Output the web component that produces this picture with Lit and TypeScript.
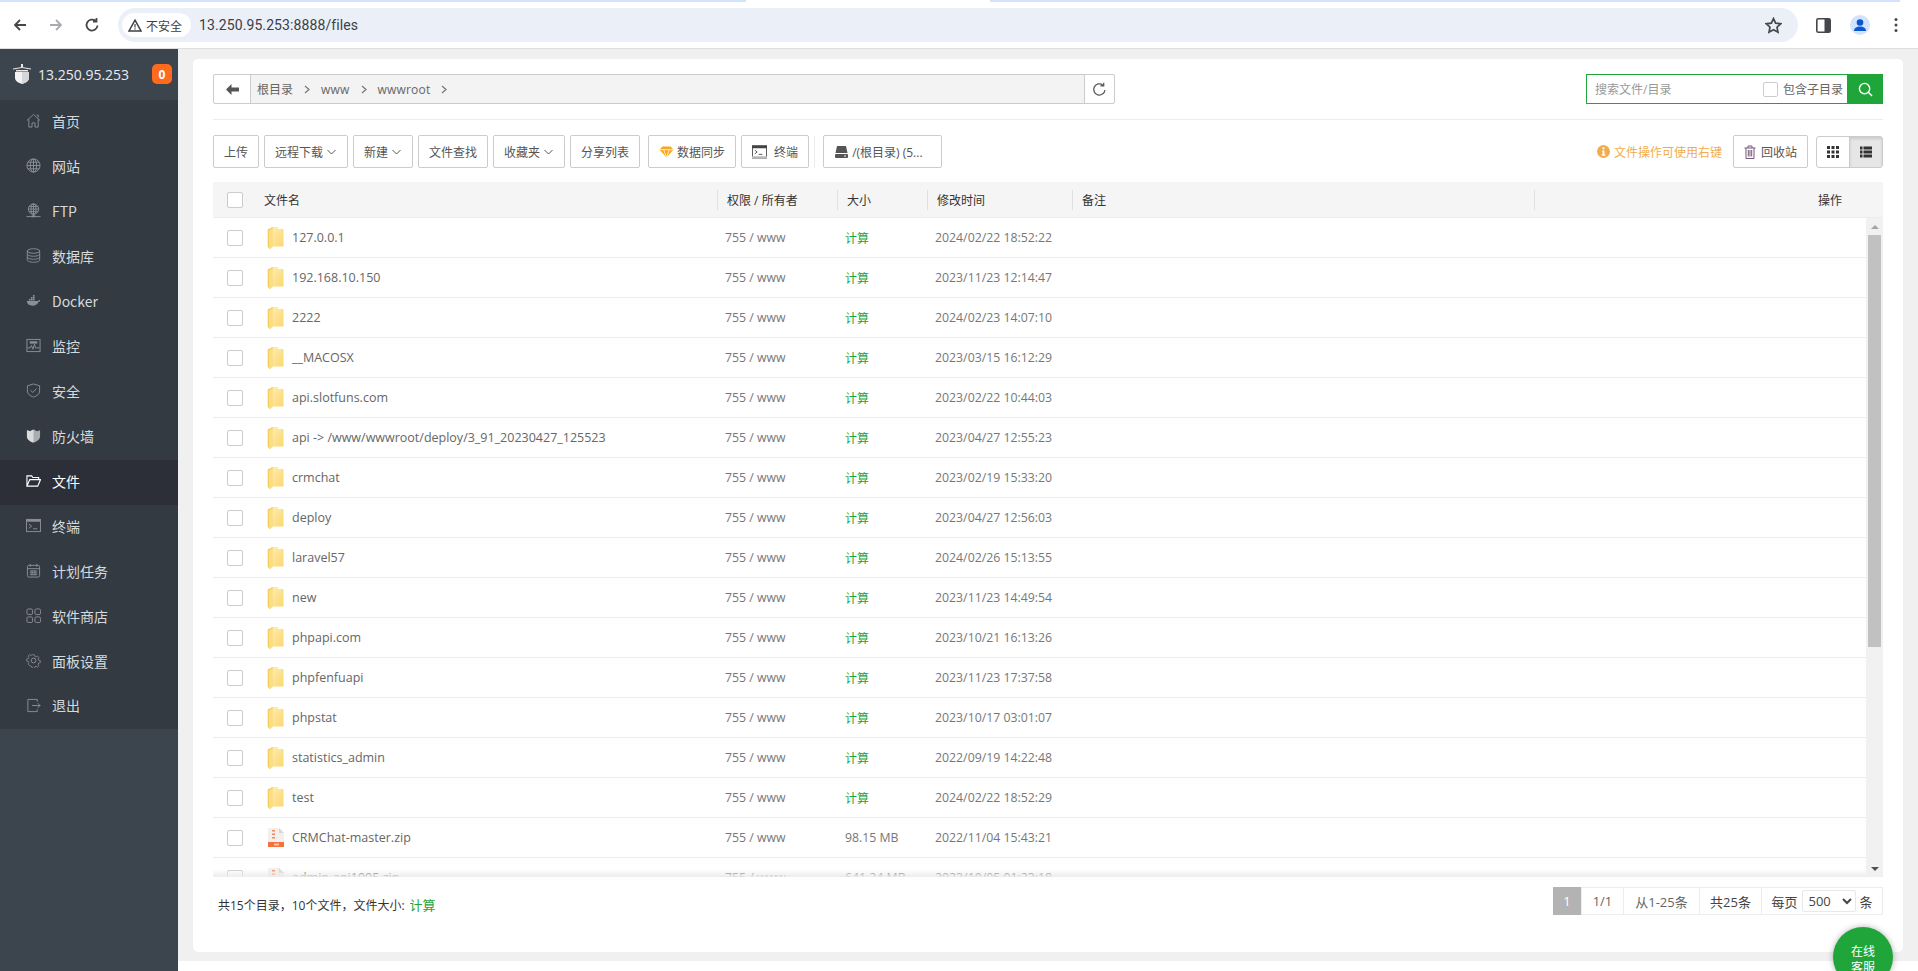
import { LitElement, html, css, svg } from "lit";
import { customElement } from "lit/decorators.js";

const ic = (body: unknown, cls = "sic") => html`<svg class=${cls} viewBox="0 0 16 16">${body}</svg>`;

const navIcons: Record<string, unknown> = {
  home: svg`<path d="M1 8 8 1.5 15 8M3 6.6V15h3.4v-4.4h3.2V15H13V6.6M11.6 2.2h1.4v2.6"/>`,
  globe: svg`<circle cx="8" cy="8" r="7"/><ellipse cx="8" cy="8" rx="3.4" ry="7"/><path d="M8 1v14M1 8h14M2 4.500h12M2 11.500h12"/>`,
  ftp: svg`<circle cx="8" cy="6.500" r="5.500"/><ellipse cx="8" cy="6.500" rx="2.600" ry="5.500"/><path d="M8 1v11M2.500 6.500h11M3.400 3.800h9.200M3.400 9.200h9.200M8 12v2M0.500 14.500h15"/><rect class="f" x="6" y="13.200" width="4" height="2"/>`,
  db: svg`<ellipse cx="8" cy="3.200" rx="6.600" ry="2.400"/><path d="M1.400 3.200v9.600c0 1.300 3 2.400 6.600 2.400s6.600-1.100 6.600-2.400V3.200M1.400 6.400c0 1.300 3 2.400 6.600 2.400s6.600-1.100 6.600-2.400M1.400 9.600c0 1.300 3 2.400 6.600 2.400s6.600-1.100 6.600-2.400"/>`,
  docker: svg`<path class="f" d="M.8 8.600h12c.4-.9 1.300-1.300 2.400-1-.2 1-1 1.700-2 1.900-1 2.700-3.200 4-6.300 4-3.700 0-5.700-1.800-6.100-4.900Z"/><path class="f" d="M3 6.400h1.800v1.700H3zM5.200 6.400H7v1.700H5.200zM7.400 6.400h1.800v1.700H7.400zM5.200 4.300H7V6H5.200zM7.400 4.300h1.800V6H7.400zM7.400 2.200h1.800v1.700H7.400z"/>`,
  monitor: svg`<rect x="1" y="1.500" width="14" height="13"/><path d="M1.500 10.500h3l1.300-2.500 1.700 4 1.500-5.500 1.200 4h4.300"/><rect class="f" x="4" y="3.500" width="8" height="2.500"/>`,
  shield: svg`<path d="M8 1 14.500 3v5.500c0 3.200-2.800 5.300-6.500 6.500-3.700-1.200-6.500-3.300-6.500-6.500V3Z"/><path d="m4.800 7.700 2.400 2.400 4-4.200"/>`,
  wall: svg`<path class="l" d="M1 2.500 4.300 3.500 8 1.500 11.700 3.500 15 2.500V9c0 3-3.500 5.500-7 6.500-3.500-1-7-3.500-7-6.500Z"/><path class="f2" d="M1 2.500 4.300 3.500 8 1.500v14c-3.500-1-7-3.500-7-6.500Z"/>`,
  folder: svg`<path class="w" d="M1 14V3h5l1.300 1.800h6.200V7M1 14h11.500L15.500 7H4L1 14Z"/>`,
  term: svg`<rect x=".5" y="1.500" width="15" height="13"/><rect class="f" x=".5" y="1.500" width="15" height="2.500"/><path d="m3 6.500 3 2.200-3 2.200M7.500 11.500H12"/>`,
  cal: svg`<rect x="1.500" y="2.500" width="13" height="12.500" rx="1.500"/><path d="M1.500 6h13M4.500 1v3M11.500 1v3M4 8.500h8M4 10.500h8M4 12.500h8M6.500 8v5M9.500 8v5"/>`,
  grid: svg`<rect x="1" y="1" width="6" height="6" rx="1.500"/><rect x="9.500" y="1" width="6" height="6" rx="1.500"/><rect x="1" y="9.500" width="6" height="6" rx="1.500"/><rect x="9.500" y="9.500" width="6" height="6" rx="1.500"/>`,
  gear: svg`<circle cx="8" cy="8" r="2.500"/><path d="M6.700 1h2.600l.4 2 1.500.7 1.800-1.100 1.800 1.800-1.100 1.800.7 1.500 2 .4v2.600l-2 .4-.7 1.500 1.100 1.800-1.800 1.800-1.800-1.100-1.500.7-.4 2H6.700l-.4-2-1.500-.7L3 14.200l-1.800-1.800 1.100-1.800-.7-1.500-2-.4V6.100l2-.4.7-1.500L1.200 2.400 3 .6l1.800 1.100 1.500-.7Z" transform="translate(1.100 1.100) scale(.86)"/>`,
  exit: svg`<path d="M12 4V1.500H2v13h10V12M6.500 8h8.500M12.500 5.500 15 8l-2.500 2.500"/>`,
};

const nav: [string, string, boolean?][] = [
  ["首页", "home"], ["网站", "globe"], ["FTP", "ftp"], ["数据库", "db"], ["Docker", "docker"],
  ["监控", "monitor"], ["安全", "shield"], ["防火墙", "wall"], ["文件", "folder", true], ["终端", "term"],
  ["计划任务", "cal"], ["软件商店", "grid"], ["面板设置", "gear"], ["退出", "exit"],
];

const rows: [string, string, string, string?][] = [
  ["127.0.0.1", "755 / www", "2024/02/22 18:52:22"],
  ["192.168.10.150", "755 / www", "2023/11/23 12:14:47"],
  ["2222", "755 / www", "2024/02/23 14:07:10"],
  ["__MACOSX", "755 / www", "2023/03/15 16:12:29"],
  ["api.slotfuns.com", "755 / www", "2023/02/22 10:44:03"],
  ["api -> /www/wwwroot/deploy/3_91_20230427_125523", "755 / www", "2023/04/27 12:55:23"],
  ["crmchat", "755 / www", "2023/02/19 15:33:20"],
  ["deploy", "755 / www", "2023/04/27 12:56:03"],
  ["laravel57", "755 / www", "2024/02/26 15:13:55"],
  ["new", "755 / www", "2023/11/23 14:49:54"],
  ["phpapi.com", "755 / www", "2023/10/21 16:13:26"],
  ["phpfenfuapi", "755 / www", "2023/11/23 17:37:58"],
  ["phpstat", "755 / www", "2023/10/17 03:01:07"],
  ["statistics_admin", "755 / www", "2022/09/19 14:22:48"],
  ["test", "755 / www", "2024/02/22 18:52:29"],
  ["CRMChat-master.zip", "755 / www", "2022/11/04 15:43:21", "98.15 MB"],
  ["admin-api1005.zip", "755 / www", "2023/10/05 01:23:18", "641.24 MB"],
];

const chev = html`<svg class="chev" viewBox="0 0 10 6"><path d="M1 1l4 4 4-4"/></svg>`;
const folderIcon = html`<svg class="ficon" viewBox="0 0 17 24">
  <defs><linearGradient id="fg" x1="0" x2="1" y1="0" y2="1"><stop offset="0" stop-color="#fdedb4"/><stop offset="1" stop-color="#fbd76c"/></linearGradient></defs>
  <path d="M5 1h5.500l1 2h5V20.500H5Z" fill="url(#fg)"/>
  <path d="M.8 3.500 5.800 1v19.500L2.800 23.500.8 21Z" fill="#fbdd84"/>
  <path d="M.8 3.500 5.800 1v1L2 4.200V22L.8 21Z" fill="#f3cd62"/>
  </svg>`;
const zipIcon = html`<svg class="zicon" viewBox="0 0 16 19">
  <path d="M0 0h11l5 5v14H0Z" fill="#f3efec"/>
  <path d="M11 0l5 5h-5Z" fill="#dcd8d4"/>
  <rect x="0" y="14" width="16" height="5" fill="#f4703c"/>
  <path d="M4 2h3v1.500H4zM4 5.500h3V7H4zM4 9h3v1.500H4z" fill="#ee8a60"/>
  <rect x="6" y="15.500" width="5" height="2" fill="#f9c0a6"/>
  </svg>`;

@customElement("app-root")
export class AppRoot extends LitElement {
  static styles = css`
    :host { display: block; width: 1918px; height: 971px; overflow: hidden; position: relative; background: #fff;
      font-family: "Open Sans", "Noto Sans CJK SC", sans-serif; font-size: 12px; color: #555; }
    * { box-sizing: border-box; }
    .strip { display: flex; height: 2px; }
    .strip i { background: #d3e3fd; width: 746px; }
    .strip b { flex: 1; }
    .strip i:last-child { width: 910px; margin-right: 18px; }
    .chrome { height: 47px; display: flex; align-items: flex-start; border-bottom: 1px solid #dedede; padding-top: 6px; }
    .navb { width: 118px; height: 34px; display: flex; align-items: center; flex: none; padding-left: 12px; gap: 20px; }
    .navb svg { width: 16px; height: 16px; fill: none; stroke: #45474a; stroke-width: 1.8; }
    .navb svg.off { stroke: #a8abaf; }
    .addr { width: 1680px; height: 34px; border-radius: 17px; background: #ebeff8; display: flex; align-items: center; padding: 0 4px; flex: none; position: relative; }
    .pill { width: 69px; height: 24px; border-radius: 12px; background: #fff; display: flex; align-items: center; padding-left: 6px; gap: 4px; font-size: 12px; color: #3c4043; flex: none; font-family: "Noto Sans CJK SC", sans-serif; }
    .pill svg { width: 14px; height: 13px; flex: none; }
    .url { font-family: Roboto, sans-serif; font-size: 14px; margin-left: 8px; color: #3c4043; letter-spacing: .1px; }
    .star { width: 17px; height: 17px; margin-left: auto; margin-right: 12px; fill: none; stroke: #45474a; stroke-width: 1.6; }
    .cright { display: flex; align-items: center; height: 34px; flex: 1; position: relative; }
    .panel { width: 15px; height: 15px; margin-left: 18px; }
    .avatar { width: 20px; height: 20px; margin-left: 19px; }
    .dots { width: 4px; height: 16px; margin-left: 24px; }
    .layout { display: flex; height: 922px; }
    .side { width: 178px; flex: none; background: #3c444d; height: 100%; }
    .brand { height: 51px; display: flex; align-items: center; padding-left: 13px; padding-bottom: 1px; color: #fff; }
    .brand .logo { width: 18px; height: 20px; flex: none; margin-right: 7px; }
    .brand .name { flex: 1; font-size: 14px; color: #e8ecef; }
    .badge { width: 20px; height: 20px; background: #ff6a1c; border-radius: 5px; color: #fff; font-size: 12px; font-weight: 700; display: flex; align-items: center; justify-content: center; margin-right: 6px; }
    .menu { background: #333a42; height: 629px; }
    .item { height: 45px; display: flex; align-items: center; padding-left: 26px; padding-bottom: 4px; gap: 11px; font-size: 14px; color: #d6dadd; font-family: "Noto Sans CJK SC", sans-serif; }
    .item.on { background: #2c2f38; color: #fff; }
    .item:last-child { height: 44px; }
    .sic { width: 15px; height: 15px; fill: none; stroke: #8b9096; stroke-width: 1; flex: none; }
    .sic .f { fill: #8b9096; stroke: none; }
    .sic .l { fill: #a9adb1; stroke: none; }
    .sic .f2 { fill: #d9dbdd; stroke: none; }
    .sic .w { stroke: #fff; stroke-width: 1.2; }
    .mainwrap { flex: 1; display: flex; flex-direction: column; min-width: 0; }
    .main { height: 912px; background: #f0f0f0; padding: 10px 15px 9px; }
    .card { height: 893px; background: #fff; border-radius: 5px; padding: 15px 20px 0; }
    .top { display: flex; justify-content: space-between; height: 46px; border-bottom: 1px solid #ececec; }
    .path { width: 902px; height: 30px; display: flex; border: 1px solid #ccc; border-radius: 2px; }
    .back { width: 37px; flex: none; border-right: 1px solid #ccc; display: flex; align-items: center; justify-content: center; }
    .back svg { width: 13px; height: 11px; fill: #555; }
    .crumbs { flex: 1; background: #f3f3f3; display: flex; align-items: center; padding-left: 6px; font-size: 12px; color: #666; }
    .crumbs span { margin-right: 11px; letter-spacing: .2px; }
    .crumbs span:first-child { letter-spacing: 0; }
    .crumbs svg { width: 6px; height: 9px; fill: none; stroke: #777; stroke-width: 1.2; margin-right: 11px; }
    .refresh { width: 30px; flex: none; border-left: 1px solid #ccc; display: flex; align-items: center; justify-content: center; }
    .refresh svg { width: 15px; height: 15px; fill: none; stroke: #555; stroke-width: 1.3; }
    .search { width: 297px; height: 30px; display: flex; border: 1px solid #20a53a; align-items: center; }
    .ph { color: #999; padding-left: 8px; flex: 1; }
    .search .cb { width: 15px; height: 15px; margin-right: 5px; }
    .inc { color: #666; margin-right: 5px; }
    .sbtn { width: 36px; height: 30px; background: #20a53a; display: flex; align-items: center; justify-content: center; margin: -1px; }
    .sbtn svg { width: 15px; height: 15px; fill: none; stroke: #fff; stroke-width: 1.5; }
    .cb { width: 16px; height: 16px; border: 1px solid #ccc; border-radius: 2px; background: #fff; flex: none; display: block; }
    .tools { display: flex; align-items: center; height: 33px; margin-top: 15px; gap: 5px; }
    .btn { height: 33px; display: inline-flex; align-items: center; justify-content: center; border: 1px solid #ccc; border-radius: 2px; padding: 0 10px; color: #555; background: #fff; white-space: nowrap; flex: none; }
    .chev { width: 11px; height: 6px; margin-left: 3px; fill: none; stroke: #555; stroke-width: 1; }
    .gem { margin-left: 3px; }
    .btn svg.i { width: 15px; height: 14px; margin-right: 5px; flex: none; }
    .gem svg.i { height: 13px; margin-right: 3px; }
    .term svg.i { margin-right: 7px; }
    .vsep { width: 1px; height: 32px; background: #ececec; }
    .disk { width: 119px; margin-left: 3px; justify-content: flex-start; }
    .disk svg.i { margin-right: 3px; }
    .hint { margin-left: auto; display: flex; align-items: center; gap: 4px; color: #f0ad4e; margin-right: 6px; }
    .hint svg { width: 13px; height: 13px; }
    .trash { width: 75px; }
    .trash svg { width: 12px; height: 14px; margin-right: 5px; fill: none; stroke: #76557a; stroke-width: 1; }
    .view { width: 67px; height: 32px; display: flex; border: 1px solid #ccc; border-radius: 3px; margin-left: 3px; }
    .view div { flex: 1; display: flex; align-items: center; justify-content: center; }
    .view div + div { background: #e6e6e6; border-left: 1px solid #ccc; box-shadow: inset 0 2px 3px rgba(0,0,0,.12); }
    .view svg { width: 12px; height: 12px; fill: #333; }
    .thead, .row { display: grid; grid-template-columns: 504px 120px 90px 145px 462px 1fr; align-items: center; }
    .thead { height: 36px; margin-top: 14px; background: #f5f5f5; border-bottom: 1px solid #ececec; color: #333; }
    .thead .c { height: 20px; display: flex; align-items: center; padding-left: 9px; border-left: 1px solid #e0e0e0; }
    .thead .c0 { display: flex; align-items: center; padding-left: 14px; }
    .thead .lbl { margin-left: 21px; }
    .thead .last { padding-right: 41px; justify-content: flex-end; }
    .tbody { height: 659px; display: flex; position: relative; overflow: hidden; }
    .list { width: 1653px; flex: none; }
    .row { height: 40px; border-bottom: 1px solid #ececec; color: #777; grid-template-columns: 504px 120px 90px 1fr; }
    .nm { display: flex; align-items: center; padding-left: 14px; color: #666; }
    .ficon { width: 17px; height: 24px; margin-left: 24px; flex: none; }
    .zicon { width: 16px; height: 19px; margin-left: 25px; flex: none; }
    .fname { margin-left: 8px; white-space: pre; font-size: 12.5px; }
    .row .p { padding-left: 8px; font-size: 12.3px; }
    .row .calc { color: #20a53a; font-size: 12px; }
    .fade { position: absolute; left: 0; right: 17px; bottom: 0; height: 8px; background: linear-gradient(rgba(240,240,240,0), rgba(235,235,235,.9)); }
    .bar { width: 17px; flex: none; background: #f1f1f1; display: flex; flex-direction: column; align-items: center; }
    .arrow { height: 17px; flex: none; display: flex; align-items: center; justify-content: center; }
    .arrow svg { width: 8px; height: 4px; }
    .thumb { width: 13px; height: 412px; background: #c1c1c1; flex: none; }
    .bar .sp { flex: 1; }
    .foot { display: flex; justify-content: space-between; align-items: flex-start; margin-top: 10px; }
    .sum { color: #333; padding: 8px 0 0 5px; display: flex; align-items: center; }
    .sum em { font-style: normal; color: #20a53a; font-size: 13px; margin-left: 5px; }
    .pg { display: flex; height: 28px; border: 1px solid #ececec; border-left: 0; color: #666; font-size: 13px; }
    .pg > div { display: flex; align-items: center; justify-content: center; border-left: 1px solid #ececec; }
    .pg .cur { width: 28px; background: #b3b3b3; color: #fff; border: 0; margin-top: -1px; height: 28px; }
    .pg .a { width: 42px; }
    .pg .b { width: 76px; }
    .pg .c2 { width: 62px; color: #444; }
    .pg .d { width: 121px; color: #444; gap: 4px; }
    select { width: 54px; height: 22px; border: 1px solid #e8e8e8; border-radius: 2px; background: #fff; font: 13px "Open Sans", sans-serif; color: #444; padding: 0 0 0 2px; outline: none; }
    .white { height: 10px; background: #fff; }
    .kefu { position: absolute; left: 1833px; top: 927px; width: 60px; height: 60px; border-radius: 50%; background: #20a53a; color: #fff; text-align: center; line-height: 16px; padding-top: 17px; box-shadow: 0 0 6px rgba(0,0,0,.3); }
  `;

  render() {
    return html`
      <div class="strip"><i></i><b></b><i></i></div>
      <div class="chrome">
        <div class="navb">
          <svg viewBox="0 0 16 16"><path d="M14 8H3M8 3 3 8l5 5"/></svg>
          <svg class="off" viewBox="0 0 16 16"><path d="M2 8h11M8 3l5 5-5 5"/></svg>
          <svg viewBox="0 0 16 16"><path d="M13.500 8.500A5.500 5.500 0 1 1 11.500 3.800M12.500 1v3.500H9"/></svg>
        </div>
        <div class="addr">
          <div class="pill">
            <svg viewBox="0 0 14 13"><path d="M7 1.200 13 12H1Z" fill="none" stroke="#3c4043" stroke-width="1.500"/><path d="M6.400 5h1.200v3.500H6.400zM6.400 9.300h1.200v1.200H6.400z" fill="#3c4043"/></svg>
            不安全
          </div>
          <span class="url">13.250.95.253:8888/files</span>
          <svg class="star" viewBox="0 0 16 16"><path d="m8 1.500 2 4.300 4.700.6-3.400 3.200.9 4.700L8 12l-4.200 2.300.9-4.700L1.300 6.400 6 5.800Z"/></svg>
        </div>
        <div class="cright">
          <svg class="panel" viewBox="0 0 15 15"><rect x=".8" y=".8" width="13.400" height="13.400" rx="1.500" fill="#fff" stroke="#45474a" stroke-width="1.600"/><rect x="8.500" y="1" width="5.500" height="13" fill="#45474a"/></svg>
          <svg class="avatar" viewBox="0 0 20 20"><circle cx="10" cy="10" r="10" fill="#d3e3fd"/><circle cx="10" cy="7.500" r="3.300" fill="#0b57d0"/><path d="M4 16c0-3 2.500-4.500 6-4.500s6 1.500 6 4.500Z" fill="#0b57d0"/></svg>
          <svg class="dots" viewBox="0 0 4 16"><circle cx="2" cy="2.500" r="1.500" fill="#45474a"/><circle cx="2" cy="8" r="1.500" fill="#45474a"/><circle cx="2" cy="13.500" r="1.500" fill="#45474a"/></svg>
        </div>
      </div>
      <div class="layout">
        <aside class="side">
          <div class="brand">
            <svg class="logo" viewBox="0 0 18 20"><path d="M2 8h14v6c0 3-3.500 5-7 6-3.500-1-7-3-7-6Z" fill="#f3f3f3"/><path d="M9 8h7v6c0 3-3.500 5-7 6Z" fill="#d4d6d8"/><path d="M0 4.500 9 3l9 1.500v1L9 4 0 5.500ZM3 6h12v1.500H3ZM8 0h2v3H8Z" fill="#e9e9e9"/></svg>
            <span class="name">13.250.95.253</span>
            <span class="badge">0</span>
          </div>
          <div class="menu">
            ${nav.map(([t, k, on]) => html`<div class="item ${on ? "on" : ""}">${ic(navIcons[k])}<span>${t}</span></div>`)}
          </div>
        </aside>
        <div class="mainwrap">
          <main class="main">
            <section class="card">
              <div class="top">
                <div class="path">
                  <div class="back"><svg viewBox="0 0 13 11"><path d="M0 5.500 5.500 0v3.500H13v4H5.500V11Z"/></svg></div>
                  <div class="crumbs">
                    <span>根目录</span><svg viewBox="0 0 6 9"><path d="m1 1 4 3.500L1 8"/></svg>
                    <span>www</span><svg viewBox="0 0 6 9"><path d="m1 1 4 3.500L1 8"/></svg>
                    <span>wwwroot</span><svg viewBox="0 0 6 9"><path d="m1 1 4 3.500L1 8"/></svg>
                  </div>
                  <div class="refresh"><svg viewBox="0 0 16 16"><path d="M13.800 8.500A6 6 0 1 1 11.500 3.200M12.500.8v3.400H9"/></svg></div>
                </div>
                <div class="search">
                  <span class="ph">搜索文件/目录</span>
                  <span class="cb"></span>
                  <span class="inc">包含子目录</span>
                  <div class="sbtn"><svg viewBox="0 0 16 16"><circle cx="7" cy="7" r="5.500"/><path d="m11 11 4 4"/></svg></div>
                </div>
              </div>
              <div class="tools">
                <span class="btn">上传</span>
                <span class="btn">远程下载${chev}</span>
                <span class="btn">新建${chev}</span>
                <span class="btn">文件查找</span>
                <span class="btn">收藏夹${chev}</span>
                <span class="btn">分享列表</span>
                <span class="btn gem"><svg class="i" viewBox="0 0 15 14"><path d="M3 1.500h9L15 5 7.500 13.500 0 5Z" fill="#f7a823"/><path d="M0 5h15M4.500 5l3 8.500 3-8.500" stroke="#fff" stroke-width=".8" fill="none"/></svg>数据同步</span>
                <span class="btn term"><svg class="i" viewBox="0 0 16 14"><rect x=".5" y=".5" width="15" height="13" fill="#fff" stroke="#555"/><rect x="0" y="0" width="16" height="3" fill="#444"/><rect x="0" y="11.500" width="16" height="2.500" fill="#bbb"/><path d="m3 5 2.500 2L3 9M7 9.500h4" fill="none" stroke="#555"/></svg>终端</span>
                <span class="vsep"></span>
                <span class="btn disk"><svg class="i" viewBox="0 0 15 14"><path d="M3 1h9l1.500 7h-12Z" fill="#555"/><rect x="1" y="9" width="13" height="4" rx="1" fill="#555"/><rect x="10" y="10.500" width="2" height="1" fill="#fff"/></svg>/(根目录) (5...</span>
                <span class="hint"><svg viewBox="0 0 14 14"><circle cx="7" cy="7" r="7" fill="#f0ad4e"/><path d="M6 2.500h2v2H6zM5.500 6h2.500v4.200h1V11.500h-4v-1.300h1V7.300h-.5Z" fill="#fff"/></svg>文件操作可使用右键</span>
                <span class="btn trash"><svg viewBox="0 0 12 14"><path d="M.5 3h11M4 3V1h4v2M2 3v10.500h8V3M4.300 5v6.500M6 5v6.500M7.700 5v6.500"/></svg>回收站</span>
                <div class="view">
                  <div><svg viewBox="0 0 12 12"><path d="M0 0h3v3H0zM4.500 0h3v3h-3zM9 0h3v3H9zM0 4.500h3v3H0zM4.500 4.500h3v3h-3zM9 4.500h3v3H9zM0 9h3v3H0zM4.500 9h3v3h-3zM9 9h3v3H9z"/></svg></div>
                  <div><svg viewBox="0 0 12 12"><path d="M0 .5h2.500v3H0zM3.500 .5H12v3H3.500zM0 4.500h2.500v3H0zM3.500 4.500H12v3H3.500zM0 8.500h2.500v3H0zM3.500 8.500H12v3H3.500z"/></svg></div>
                </div>
              </div>
              <div class="thead">
                <div class="c0"><span class="cb"></span><span class="lbl">文件名</span></div>
                <div class="c">权限 / 所有者</div>
                <div class="c">大小</div>
                <div class="c">修改时间</div>
                <div class="c">备注</div>
                <div class="c last">操作</div>
              </div>
              <div class="tbody">
                <div class="list">
                  ${rows.map(([n, p, t, s]) => html`<div class="row">
                    <div class="nm"><span class="cb"></span>${s ? zipIcon : folderIcon}<span class="fname">${n}</span></div>
                    <div class="p">${p}</div>
                    <div class="p ${s ? "" : "calc"}">${s ?? "计算"}</div>
                    <div class="p">${t}</div>
                  </div>`)}
                </div>
                <div class="fade"></div>
                <div class="bar">
                  <div class="arrow"><svg viewBox="0 0 8 4"><path d="M4 0 8 4H0Z" fill="#a3a3a3"/></svg></div>
                  <div class="thumb"></div>
                  <div class="sp"></div>
                  <div class="arrow"><svg viewBox="0 0 8 4"><path d="M0 0h8L4 4Z" fill="#505050"/></svg></div>
                </div>
              </div>
              <div class="foot">
                <div class="sum">共15个目录，10个文件，文件大小: <em>计算</em></div>
                <div class="pg">
                  <div class="cur">1</div>
                  <div class="a">1/1</div>
                  <div class="b">从1-25条</div>
                  <div class="c2">共25条</div>
                  <div class="d">每页<select><option>500</option></select>条</div>
                </div>
              </div>
            </section>
          </main>
          <div class="white"></div>
        </div>
      </div>
      <div class="kefu">在线<br />客服</div>
    `;
  }
}
